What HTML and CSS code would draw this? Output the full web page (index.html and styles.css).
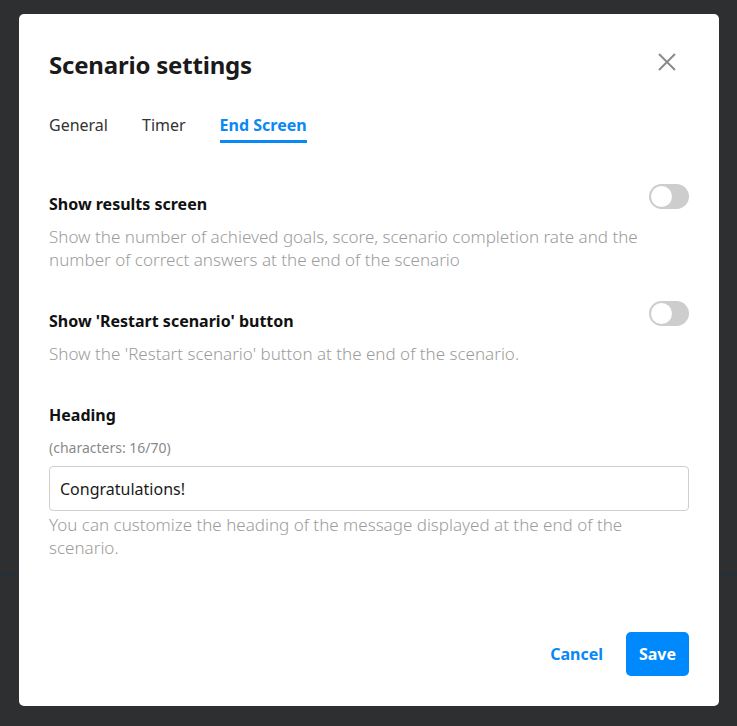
FILE: index.html
```html
<!DOCTYPE html>
<html lang="en">
<head>
  <meta charset="UTF-8">
  <title>Scenario settings</title>
  <link rel="stylesheet" href="styles.css">
</head>
<body>

  <div class="backdrop">
    <div class="backdrop-line"></div>
  </div>

  <div class="overlay">
    <div class="modal">

      <div class="modal-header">
        <h1>Scenario settings</h1>
        <button class="close" aria-label="Close">
          <svg width="18" height="18" viewBox="0 0 18 18">
            <path d="M1 1 L17 17 M17 1 L1 17" stroke="#8a8a8a" stroke-width="2" fill="none"/>
          </svg>
        </button>
      </div>

      <div class="tabs">
        <div class="tab">General</div>
        <div class="tab">Timer</div>
        <div class="tab active">End Screen</div>
      </div>

      <div class="setting">
        <div class="setting-row">
          <div class="setting-title">Show results screen</div>
          <div class="toggle"><span class="knob"></span></div>
        </div>
        <div class="hint">Show the number of achieved goals, score, scenario completion rate and the number of correct answers at the end of the scenario</div>
      </div>

      <div class="setting">
        <div class="setting-row">
          <div class="setting-title">Show 'Restart scenario' button</div>
          <div class="toggle"><span class="knob"></span></div>
        </div>
        <div class="hint">Show the 'Restart scenario' button at the end of the scenario.</div>
      </div>

      <div class="setting field">
        <div class="setting-title">Heading</div>
        <div class="counter">(characters: 16/70)</div>
        <input type="text" value="Congratulations!">
        <div class="hint">You can customize the heading of the message displayed at the end of the scenario.</div>
      </div>

      <div class="modal-footer">
        <button class="btn-link">Cancel</button>
        <button class="btn-primary">Save</button>
      </div>

    </div>
  </div>

</body>
</html>
```

FILE: styles.css
```css
body {
  margin: 0;
  background-color: #2e2f31;
  font-family: "Noto Sans", "Open Sans", sans-serif;
  color: #1a1a1a;
}

.backdrop {
  position: fixed;
  inset: 0;
}

.backdrop-line {
  position: absolute;
  left: 0;
  right: 0;
  top: 575px;
  height: 1px;
  background-color: #1c3148;
}

.overlay {
  position: relative;
  padding: 14px 18px 0 19px;
}

.modal {
  width: 700px;
  height: 692px;
  box-sizing: border-box;
  background-color: white;
  border-radius: 5px;
  padding: 30px 30px 30px 30px;
  display: flex;
  flex-direction: column;
}

.modal-header {
  display: flex;
  justify-content: space-between;
  align-items: center;
  height: 40px;
}

h1 {
  font-size: 24px;
  font-weight: 700;
  margin: 0;
  letter-spacing: -0.2px;
}

.close {
  border: none;
  background: none;
  padding: 0;
  margin-right: 13px;
  margin-top: -4px;
  cursor: pointer;
  display: flex;
}

.tabs {
  display: flex;
  gap: 34px;
  margin-top: 30px;
}

.tab {
  font-size: 16px;
  color: #333;
  padding-bottom: 4px;
  border-bottom: 3px solid transparent;
}

.tab.active {
  color: #0a88f5;
  font-weight: 700;
  border-bottom-color: #0a88f5;
}

.setting {
  margin-top: 46px;
}

.setting + .setting {
  margin-top: 35px;
}

.setting.field {
  margin-top: 35px;
}

.setting-row {
  display: flex;
  justify-content: space-between;
  align-items: flex-start;
}

.setting-title {
  font-size: 16px;
  font-weight: 700;
  color: #111;
  padding-top: 4px;
}

.toggle {
  width: 40px;
  height: 25px;
  border-radius: 13px;
  background-color: #cdcdcd;
  position: relative;
  flex-shrink: 0;
  margin-top: -5px;
}

.knob {
  position: absolute;
  left: 2px;
  top: 2px;
  width: 21px;
  height: 21px;
  border-radius: 50%;
  background-color: white;
}

.hint {
  font-size: 17px;
  font-weight: 300;
  line-height: 23px;
  color: #9c9c9c;
  margin-top: 10px;
  padding-right: 40px;
}

.field .hint {
  margin-top: 2px;
}

.counter {
  font-size: 14px;
  color: #8a8a8a;
  margin-top: 12px;
  margin-bottom: 9px;
}

input {
  width: 100%;
  box-sizing: border-box;
  height: 45px;
  border: 1px solid #cfcfcf;
  border-radius: 4px;
  padding: 0 10px;
  font-family: inherit;
  font-size: 16px;
  color: #1a1a1a;
}

.modal-footer {
  margin-top: auto;
  display: flex;
  justify-content: flex-end;
  align-items: center;
  gap: 23px;
}

.btn-link {
  border: none;
  background: none;
  font-family: inherit;
  font-size: 16px;
  font-weight: 700;
  color: #0a88f5;
  padding: 0;
  cursor: pointer;
}

.btn-primary {
  border: none;
  border-radius: 5px;
  background-color: #0088fd;
  color: white;
  font-family: inherit;
  font-size: 16px;
  font-weight: 700;
  height: 44px;
  width: 63px;
  cursor: pointer;
}
```
